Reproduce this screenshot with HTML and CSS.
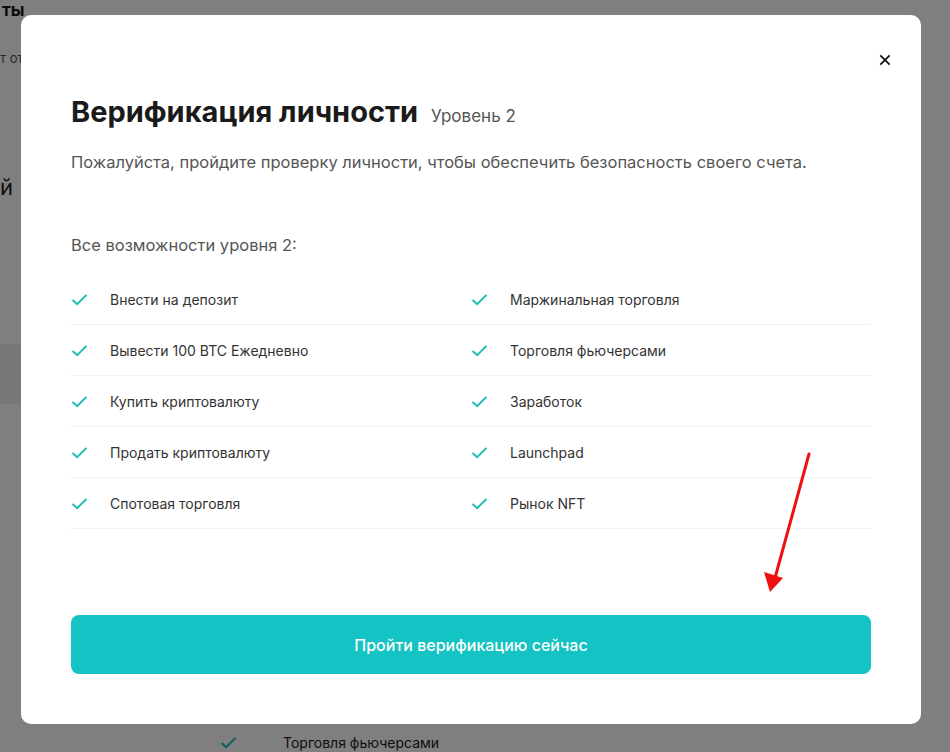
FILE: index.html
```html
<!DOCTYPE html>
<html lang="ru">
<head>
    <meta charset="UTF-8">
    <meta name="viewport" content="width=device-width, initial-scale=1.0">
    <title>Верификация личности</title>
    <link rel="stylesheet" href="styles.css">
</head>
<body>
    <!-- страница под модальным окном -->
    <div class="page">
        <div class="page-title">ты</div>
        <div class="page-note">т от</div>
        <div class="page-big">й</div>
        <div class="page-bar"></div>
        <div class="page-row">
            <svg class="check" viewBox="0 0 18 14"><path d="M1.5 7.5 L6.5 12 L16.5 2" /></svg>
            <span>Торговля фьючерсами</span>
        </div>
    </div>

    <div class="overlay">
        <div class="modal">
            <button class="close" aria-label="Закрыть">
                <svg viewBox="0 0 14 14"><path d="M1.5 1.5 L12.5 12.5 M12.5 1.5 L1.5 12.5" /></svg>
            </button>

            <h1 class="title">Верификация личности <span class="level">Уровень 2</span></h1>
            <p class="desc">Пожалуйста, пройдите проверку личности, чтобы обеспечить безопасность своего счета.</p>

            <div class="features-label">Все возможности уровня 2:</div>
            <ul class="features">
                <li><svg class="check" viewBox="0 0 18 14"><path d="M1.5 7.5 L6.5 12 L16.5 2" /></svg>Внести на депозит</li>
                <li><svg class="check" viewBox="0 0 18 14"><path d="M1.5 7.5 L6.5 12 L16.5 2" /></svg>Маржинальная торговля</li>
                <li><svg class="check" viewBox="0 0 18 14"><path d="M1.5 7.5 L6.5 12 L16.5 2" /></svg>Вывести 100 BTC Ежедневно</li>
                <li><svg class="check" viewBox="0 0 18 14"><path d="M1.5 7.5 L6.5 12 L16.5 2" /></svg>Торговля фьючерсами</li>
                <li><svg class="check" viewBox="0 0 18 14"><path d="M1.5 7.5 L6.5 12 L16.5 2" /></svg>Купить криптовалюту</li>
                <li><svg class="check" viewBox="0 0 18 14"><path d="M1.5 7.5 L6.5 12 L16.5 2" /></svg>Заработок</li>
                <li><svg class="check" viewBox="0 0 18 14"><path d="M1.5 7.5 L6.5 12 L16.5 2" /></svg>Продать криптовалюту</li>
                <li><svg class="check" viewBox="0 0 18 14"><path d="M1.5 7.5 L6.5 12 L16.5 2" /></svg>Launchpad</li>
                <li><svg class="check" viewBox="0 0 18 14"><path d="M1.5 7.5 L6.5 12 L16.5 2" /></svg>Спотовая торговля</li>
                <li><svg class="check" viewBox="0 0 18 14"><path d="M1.5 7.5 L6.5 12 L16.5 2" /></svg>Рынок NFT</li>
            </ul>

            <button class="verify-btn">Пройти верификацию сейчас</button>

            <!-- красная стрелка-пометка поверх окна -->
            <svg class="arrow" viewBox="0 0 60 150">
                <path class="arrow-line" d="M48 4 L14 128" />
                <path class="arrow-head" d="M3 122 L22 128 L9 142 Z" />
            </svg>
        </div>
    </div>
</body>
</html>
```

FILE: styles.css
```css
body {
    margin: 0;
    font-family: Inter, "Noto Sans", sans-serif;
    background: #fff;
    color: #1a1a1a;
    overflow: hidden;
}
.page {
    height: 752px;
    position: relative;
}
.page-title {
    font-size: 17px;
    line-height: 20px;
    font-weight: 700;
    padding-left: 2px;
}
.page-note {
    font-size: 13px;
    color: #555;
    margin-top: 30px;
}
.page-big {
    font-size: 22px;
    margin-top: 108px;
}
.page-bar {
    height: 60px;
    width: 40px;
    background: #eee;
    margin-top: 144px;
}
.page-row {
    position: absolute;
    left: 220px;
    top: 734px;
    display: flex;
    gap: 24px;
    align-items: center;
    font-size: 14px;
    color: #222;
}
.overlay {
    position: fixed;
    inset: 0;
    background: rgba(0, 0, 0, 0.5);
}
.modal {
    position: absolute;
    left: 21px;
    top: 15px;
    width: 900px;
    height: 709px;
    box-sizing: border-box;
    padding: 79px 50px 50px;
    background: #fff;
    border-radius: 10px;
}
.close {
    position: absolute;
    top: 37px;
    right: 28px;
    width: 16px;
    height: 16px;
    padding: 0;
    border: none;
    background: none;
    cursor: pointer;
}
.close svg {
    width: 12px;
    height: 12px;
    display: block;
    margin: 2px;
}
.close path {
    stroke: #111;
    stroke-width: 2;
    fill: none;
}
.title {
    margin: 0;
    font-size: 29px;
    line-height: 36px;
    font-weight: 700;
    color: #1a1a1a;
}
.level {
    font-size: 17px;
    font-weight: 400;
    color: #555;
    margin-left: 6px;
}
.desc {
    margin: 16px 0 0;
    font-size: 16.5px;
    line-height: 24px;
    color: #555;
}
.features-label {
    margin-top: 59px;
    font-size: 16.5px;
    line-height: 24px;
    color: #555;
}
.features {
    list-style: none;
    margin: 17px 0 0;
    padding: 0;
    display: grid;
    grid-template-columns: 1fr 1fr;
}
.features li {
    height: 50px;
    border-bottom: 1px solid #f2f2f2;
    display: flex;
    align-items: center;
    font-size: 14px;
    color: #333;
}
.check {
    width: 17px;
    height: 13px;
    flex-shrink: 0;
    margin-right: 22px;
}
.check path {
    stroke: #1fbdb7;
    stroke-width: 2.2;
    fill: none;
}
.verify-btn {
    display: block;
    width: 100%;
    height: 59px;
    margin-top: 86px;
    border: none;
    border-radius: 8px;
    background: #14c3c3;
    color: #fff;
    font-family: inherit;
    font-size: 16px;
    font-weight: 500;
    cursor: pointer;
}
.arrow {
    position: absolute;
    left: 740px;
    top: 435px;
    width: 60px;
    height: 150px;
    overflow: visible;
}
.arrow-line {
    stroke: #f01010;
    stroke-width: 3;
    stroke-linecap: round;
    fill: none;
}
.arrow-head {
    fill: #f01010;
}
```
